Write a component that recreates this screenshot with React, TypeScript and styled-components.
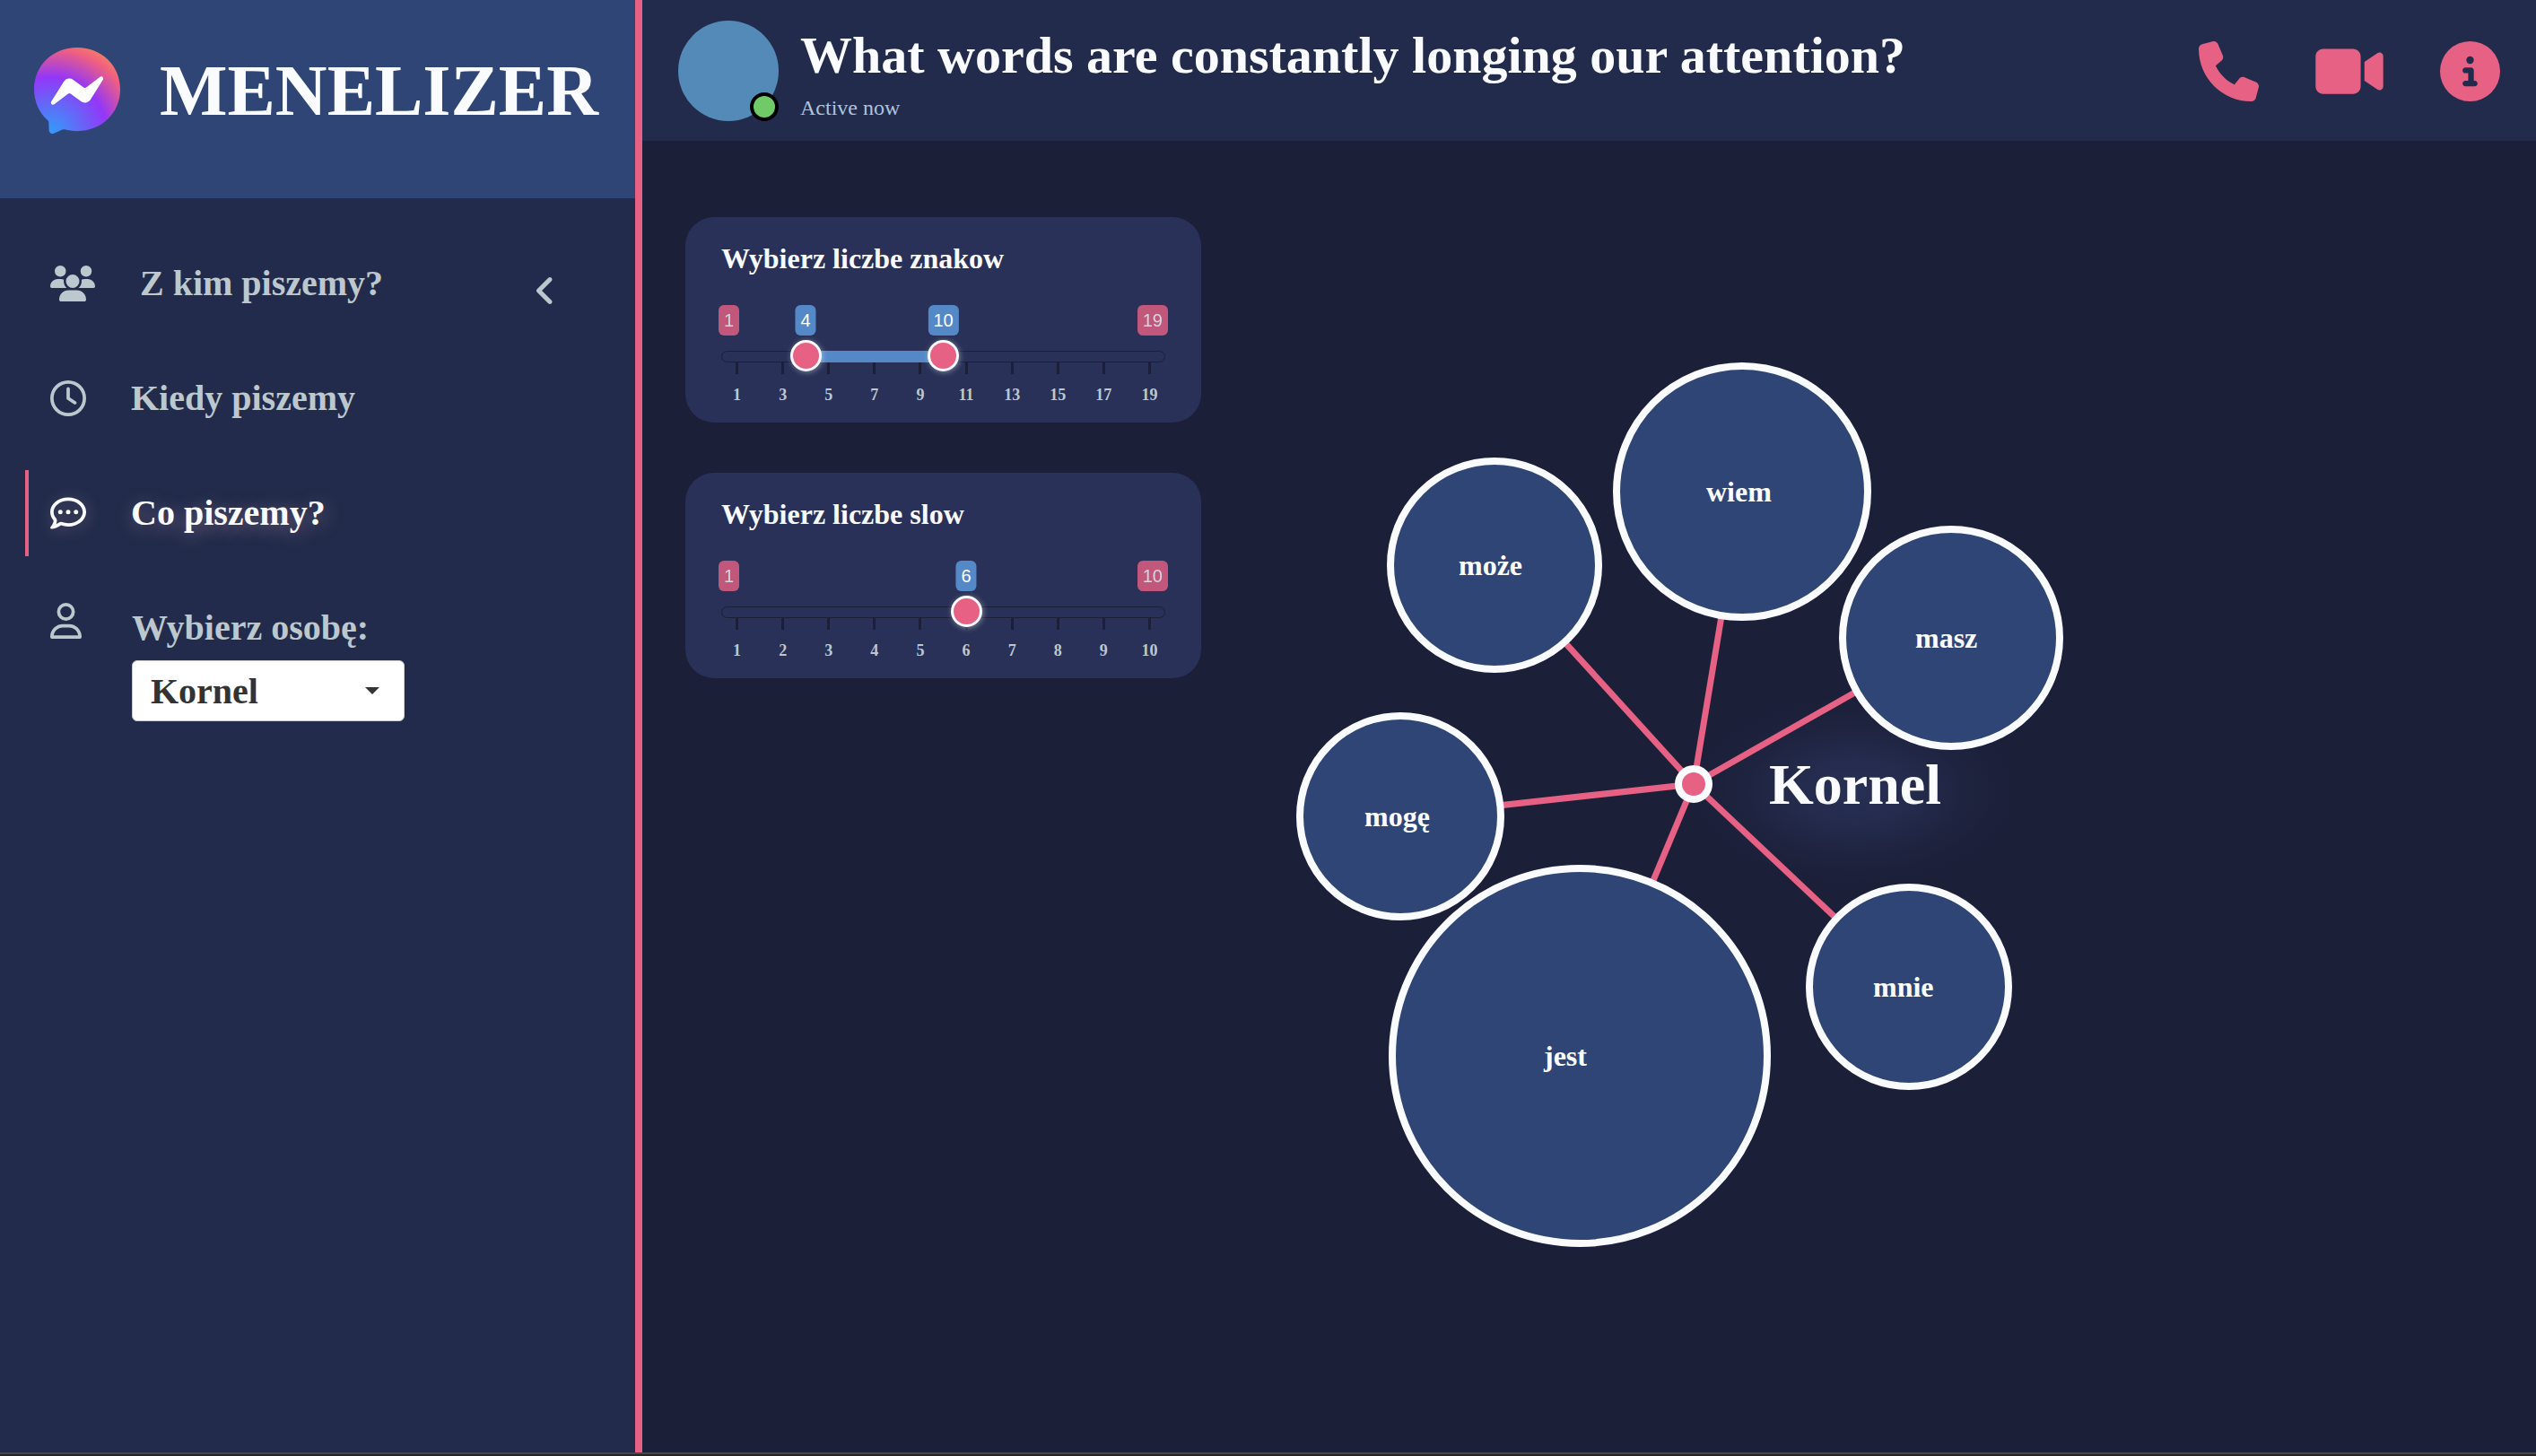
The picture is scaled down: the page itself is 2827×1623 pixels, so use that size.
import React, { useId, useState } from "react";
import styled, { createGlobalStyle, css } from "styled-components";
import {
  FaAngleLeft,
  FaCircleInfo,
  FaPhone,
  FaRegClock,
  FaRegCommentDots,
  FaRegUser,
  FaUsers,
  FaVideo,
} from "react-icons/fa6";

const color = {
  page: "#1b1f38",
  panel: "#222b4b",
  brand: "#2f4575",
  card: "#293158",
  pink: "#e76184",
  blue: "#5488c6",
  avatar: "#538ab8",
  text: "#fafbfe",
  muted: "#bcc8cd",
  online: "#70ca68",
  glow: "#272f54",
};

const serif = `"Liberation Serif", "Times New Roman", serif`;
const sans = `"Liberation Sans", Arial, sans-serif`;

const GlobalStyle = createGlobalStyle`
  *, *::before, *::after { box-sizing: border-box; }
  body {
    margin: 0;
    background: ${color.page};
    color: ${color.text};
    font-family: ${serif};
  }
`;

const Page = styled.div`
  display: flex;
  flex-direction: column;
  min-height: 100vh;
`;

const Columns = styled.div`
  display: flex;
  flex: 1;
`;

const BottomEdge = styled.footer`
  height: 4px;
  border-top: 2px solid #474744;
  background: #2a2223;
`;

/* Sidebar */

const Sidebar = styled.aside`
  flex: none;
  width: 716px;
  border-right: 8px solid ${color.pink};
  background: ${color.panel};
`;

const Brand = styled.div`
  display: flex;
  align-items: center;
  gap: 44px;
  height: 221px;
  padding: 0 38px 20px;
  background: ${color.brand};
`;

const BrandName = styled.h1`
  margin: 0;
  font-size: 80px;
  line-height: 92px;
  font-weight: 700;
`;

const Nav = styled.nav`
  display: flex;
  flex-direction: column;
  gap: 32px;
  padding: 47px 28px;
`;

const rowBox = css`
  display: flex;
  min-height: 96px;
  padding: 20px 24px;
  border-left: 4px solid transparent;
  color: ${color.muted};
  font-size: 40px;
  line-height: 46px;
  font-weight: 700;
`;

const NavLink = styled.a<{ $active?: boolean }>`
  ${rowBox}
  align-items: center;
  gap: 50px;
  text-decoration: none;
  ${({ $active }) =>
    $active &&
    css`
      border-left-color: ${color.pink};
      color: ${color.text};
      text-shadow: 2px 4px 20px rgba(240, 190, 210, 0.4);
      svg {
        filter: drop-shadow(2px 2px 8px rgba(240, 190, 210, 0.3));
      }
    `}
`;

const PeopleIcon = styled(FaUsers)`
  flex: none;
  width: 50px;
`;

const PersonIcon = styled(FaRegUser)`
  flex: none;
  width: 35px;
`;

const Chevron = styled(FaAngleLeft)`
  align-self: flex-end;
  margin: 0 28px 0 auto;
`;

const PersonRow = styled.div`
  ${rowBox}
  align-items: flex-start;
  gap: 56px;
`;

const Field = styled.div`
  display: flex;
  flex-direction: column;
  gap: 13px;
  padding-top: 5px;
`;

const SelectBox = styled.div`
  display: grid;
  align-items: center;
  width: 304px;
  > * {
    grid-area: 1 / 1;
  }
`;

const Select = styled.select`
  appearance: none;
  width: 100%;
  height: 68px;
  padding: 0 48px 0 20px;
  border: 1px solid #ccc;
  border-radius: 6px;
  background: #fff;
  color: #333;
  font: 700 40px ${serif};
`;

const Caret = styled.svg`
  justify-self: end;
  margin-right: 28px;
  pointer-events: none;
`;

/* Conversation header */

const Main = styled.main`
  display: flex;
  flex: 1;
  flex-direction: column;
  min-width: 0;
`;

const TopBar = styled.header`
  display: flex;
  align-items: flex-start;
  gap: 24px;
  height: 157px;
  padding: 23px 40px;
  background: ${color.panel};
`;

const Avatar = styled.div`
  position: relative;
  flex: none;
  width: 112px;
  height: 112px;
  border-radius: 50%;
  background: ${color.avatar};
`;

const OnlineDot = styled.span`
  position: absolute;
  right: 0;
  bottom: 0;
  width: 32px;
  height: 32px;
  border: 4px solid #000;
  border-radius: 50%;
  background: ${color.online};
`;

const Heading = styled.div`
  flex: 1;
  padding-top: 5px;
`;

const Question = styled.h2`
  margin: 0;
  font-size: 58px;
  line-height: 68px;
  font-weight: 700;
`;

const Status = styled.p`
  margin: 0;
  padding-top: 10px;
  color: #adc3de;
  font-size: 24px;
  line-height: 28px;
`;

const Actions = styled.div`
  display: flex;
  gap: 63px;
  padding-top: 23px;
`;

const ActionButton = styled.button<{ $width?: number }>`
  display: flex;
  padding: 0;
  border: 0;
  background: none;
  color: ${color.pink};
  font-size: 67px;
  cursor: pointer;
  svg {
    width: ${({ $width = 67 }) => $width}px;
  }
`;

/* Filters */

const Content = styled.div`
  display: flex;
  flex: 1;
  padding-left: 48px;
`;

const Filters = styled.div`
  display: flex;
  flex: none;
  flex-direction: column;
  gap: 56px;
  width: 575px;
  padding-top: 85px;
`;

const Card = styled.section`
  padding: 28px 40px 21px;
  border-radius: 32px;
  background: ${color.card};
`;

const CardTitle = styled.h3`
  margin: 0 0 34px;
  font-size: 32px;
  line-height: 36px;
  font-weight: 700;
`;

const Badges = styled.div`
  position: relative;
  display: flex;
  justify-content: space-between;
  margin-bottom: 17px;
`;

const Badge = styled.span<{ $floating?: boolean }>`
  padding: 5px 6px;
  border-radius: 6px;
  background: ${({ $floating }) => ($floating ? color.blue : color.pink)};
  color: #fff;
  font: 20px/24px ${sans};
  ${({ $floating }) =>
    $floating
      ? css`
          position: absolute;
          top: 0;
          transform: translateX(-50%);
        `
      : css`
          margin: 0 -3px;
          opacity: 0.8;
        `}
`;

const Rail = styled.div`
  position: relative;
  height: 13px;
  border: 1px solid ${color.page};
  border-radius: 7px;
`;

const RailFill = styled.span`
  position: absolute;
  top: -1px;
  bottom: -1px;
  background: ${color.blue};
`;

const thumb = css`
  width: 35px;
  height: 35px;
  border: 3px solid ${color.text};
  border-radius: 50%;
  background: ${color.pink};
  box-shadow: 1px 1px 6px rgba(255, 255, 255, 0.4);
  pointer-events: auto;
  cursor: pointer;
`;

const Range = styled.input`
  appearance: none;
  position: absolute;
  left: -1px;
  top: -14px;
  z-index: 1;
  width: calc(100% + 2px);
  height: 36px;
  margin: 0;
  background: none;
  pointer-events: none;
  &::-webkit-slider-thumb {
    appearance: none;
    ${thumb}
  }
  &::-moz-range-thumb {
    ${thumb}
  }
`;

const Scale = styled.div`
  display: grid;
  grid-auto-columns: 1fr;
  grid-auto-flow: column;
  margin: 0 -8px;
`;

const Tick = styled.span`
  display: flex;
  flex-direction: column;
  align-items: center;
  gap: 13px;
  color: ${color.muted};
  font-size: 18px;
  line-height: 20px;
  font-weight: 700;
  &::before {
    content: "";
    width: 3px;
    height: 13px;
    background: ${color.page};
  }
`;

/* Word graph */

const Stage = styled.div`
  display: flex;
  flex: 1;
  min-width: 0;
`;

const Graph = styled.svg`
  width: 100%;
  height: auto;
`;

const Edge = styled.line`
  stroke: ${color.pink};
  stroke-width: 7px;
`;

const Bubble = styled.circle`
  fill: ${color.brand};
  stroke: ${color.text};
  stroke-width: 8px;
`;

const Hub = styled(Bubble)`
  fill: ${color.pink};
`;

const Word = styled.text`
  fill: #fff;
  font: 700 32px ${serif};
`;

const Person = styled.text`
  fill: ${color.text};
  font: 700 64px ${serif};
`;

const words = [
  { text: "wiem", x: 54, y: -326, r: 140 },
  { text: "może", x: -222, y: -244, r: 116 },
  { text: "masz", x: 287, y: -163, r: 121 },
  { text: "mogę", x: -327, y: 36, r: 112 },
  { text: "jest", x: -127, y: 303, r: 209 },
  { text: "mnie", x: 240, y: 226, r: 111 },
];

const LETTER_SHIFT = 10;

function MessengerLogo() {
  const id = useId();
  return (
    <svg width="96" height="96" viewBox="0 0 800 800" role="img" aria-label="Messenger">
      <radialGradient id={id} cx="152" cy="800" r="880" gradientUnits="userSpaceOnUse">
        <stop offset="0" stopColor="#3797fb" />
        <stop offset="0.1" stopColor="#3f8ef9" />
        <stop offset="0.6" stopColor="#9437f7" />
        <stop offset="0.9" stopColor="#f06080" />
        <stop offset="1" stopColor="#f37b68" />
      </radialGradient>
      <path
        fill={`url(#${id})`}
        d="M400 0C174.700 0 0 165.100 0 388c0 116.600 47.800 217.400 125.600 287 6.500 5.800 10.500 14 10.700 22.800l2.200 71.200a32 32 0 0 0 44.900 28.300l79.400-35c6.700-3 14.300-3.500 21.400-1.600 36.500 10 75.300 15.400 115.800 15.400 225.300 0 400-165.100 400-388S625.300 0 400 0z"
      />
      <path
        fill="#fff"
        d="M159.800 501.500l117.500-186.400a60 60 0 0 1 86.800-16l93.500 70.100a24 24 0 0 0 28.900-.1l126.200-95.800c16.800-12.800 38.800 7.400 27.600 25.300L522.700 484.900a60 60 0 0 1-86.800 16l-93.500-70.100a24 24 0 0 0-28.900.1l-126.200 95.800c-16.800 12.800-38.800-7.300-27.500-25.200z"
      />
    </svg>
  );
}

type SliderProps = {
  title: string;
  min: number;
  max: number;
  step: number;
  initial: number[];
};

function SliderCard({ title, min, max, step, initial }: SliderProps) {
  const [values, setValues] = useState(initial);
  const titleId = useId();

  // The thumb is 35px wide, so its centre runs from 17.5px to 17.5px before the end.
  const at = (value: number) => {
    const share = (value - min) / (max - min);
    return `calc(${share * 100}% + ${17.5 - 35 * share}px)`;
  };

  const change = (index: number, value: number) =>
    setValues(values.map((old, i) => (i === index ? value : old)).sort((a, b) => a - b));

  const marks: number[] = [];
  for (let mark = min; mark <= max; mark += step) marks.push(mark);

  return (
    <Card>
      <CardTitle id={titleId}>{title}</CardTitle>
      <Badges>
        <Badge>{min}</Badge>
        {values.map((value, i) => (
          <Badge key={i} $floating style={{ left: at(value) }}>
            {value}
          </Badge>
        ))}
        <Badge>{max}</Badge>
      </Badges>
      <Rail>
        {values.length > 1 && (
          <RailFill
            style={{
              left: at(values[0]),
              width: `calc((100% - 35px) * ${(values[1] - values[0]) / (max - min)})`,
            }}
          />
        )}
        {values.map((value, i) => (
          <Range
            key={i}
            type="range"
            aria-labelledby={titleId}
            min={min}
            max={max}
            value={value}
            onChange={(event) => change(i, Number(event.target.value))}
          />
        ))}
      </Rail>
      <Scale>
        {marks.map((mark) => (
          <Tick key={mark}>{mark}</Tick>
        ))}
      </Scale>
    </Card>
  );
}

function WordGraph() {
  const glowId = useId();
  return (
    <Graph viewBox="-549 -717 1488 1462">
      <radialGradient id={glowId}>
        <stop offset="0" stopColor={color.glow} />
        <stop offset="0.35" stopColor={color.glow} stopOpacity="0.75" />
        <stop offset="0.7" stopColor={color.glow} stopOpacity="0.25" />
        <stop offset="1" stopColor={color.glow} stopOpacity="0" />
      </radialGradient>
      <ellipse cx={180} cy={8} rx={180} ry={104} fill={`url(#${glowId})`} />
      {words.map((word) => (
        <Edge key={word.text} x1={0} y1={0} x2={word.x} y2={word.y} />
      ))}
      {words.map((word) => (
        <g key={word.text}>
          <Bubble cx={word.x} cy={word.y} r={word.r} />
          <Word x={word.x - LETTER_SHIFT * word.text.length} y={word.y + 11}>
            {word.text}
          </Word>
        </g>
      ))}
      <Hub cx={0} cy={0} r={17} />
      <Person x={84} y={22}>
        Kornel
      </Person>
    </Graph>
  );
}

export default function App() {
  return (
    <>
      <GlobalStyle />
      <Page>
        <Columns>
          <Sidebar>
            <Brand>
              <MessengerLogo />
              <BrandName>MENELIZER</BrandName>
            </Brand>
            <Nav>
              <NavLink href="#kto">
                <PeopleIcon />
                Z kim piszemy?
                <Chevron />
              </NavLink>
              <NavLink href="#kiedy">
                <FaRegClock />
                Kiedy piszemy
              </NavLink>
              <NavLink href="#co" $active aria-current="page">
                <FaRegCommentDots />
                Co piszemy?
              </NavLink>
              <PersonRow>
                <PersonIcon />
                <Field>
                  <label htmlFor="person">Wybierz osobę:</label>
                  <SelectBox>
                    <Select id="person" defaultValue="Kornel">
                      <option>Kornel</option>
                    </Select>
                    <Caret width="16" height="8" viewBox="0 0 16 8" aria-hidden="true">
                      <path d="M0 0h16L8 8z" fill="#333" />
                    </Caret>
                  </SelectBox>
                </Field>
              </PersonRow>
            </Nav>
          </Sidebar>
          <Main>
            <TopBar>
              <Avatar>
                <OnlineDot />
              </Avatar>
              <Heading>
                <Question>What words are constantly longing our attention?</Question>
                <Status>Active now</Status>
              </Heading>
              <Actions>
                <ActionButton aria-label="Call">
                  <FaPhone />
                </ActionButton>
                <ActionButton aria-label="Video call" $width={76}>
                  <FaVideo />
                </ActionButton>
                <ActionButton aria-label="Information">
                  <FaCircleInfo />
                </ActionButton>
              </Actions>
            </TopBar>
            <Content>
              <Filters>
                <SliderCard title="Wybierz liczbe znakow" min={1} max={19} step={2} initial={[4, 10]} />
                <SliderCard title="Wybierz liczbe slow" min={1} max={10} step={1} initial={[6]} />
              </Filters>
              <Stage>
                <WordGraph />
              </Stage>
            </Content>
          </Main>
        </Columns>
        <BottomEdge />
      </Page>
    </>
  );
}
